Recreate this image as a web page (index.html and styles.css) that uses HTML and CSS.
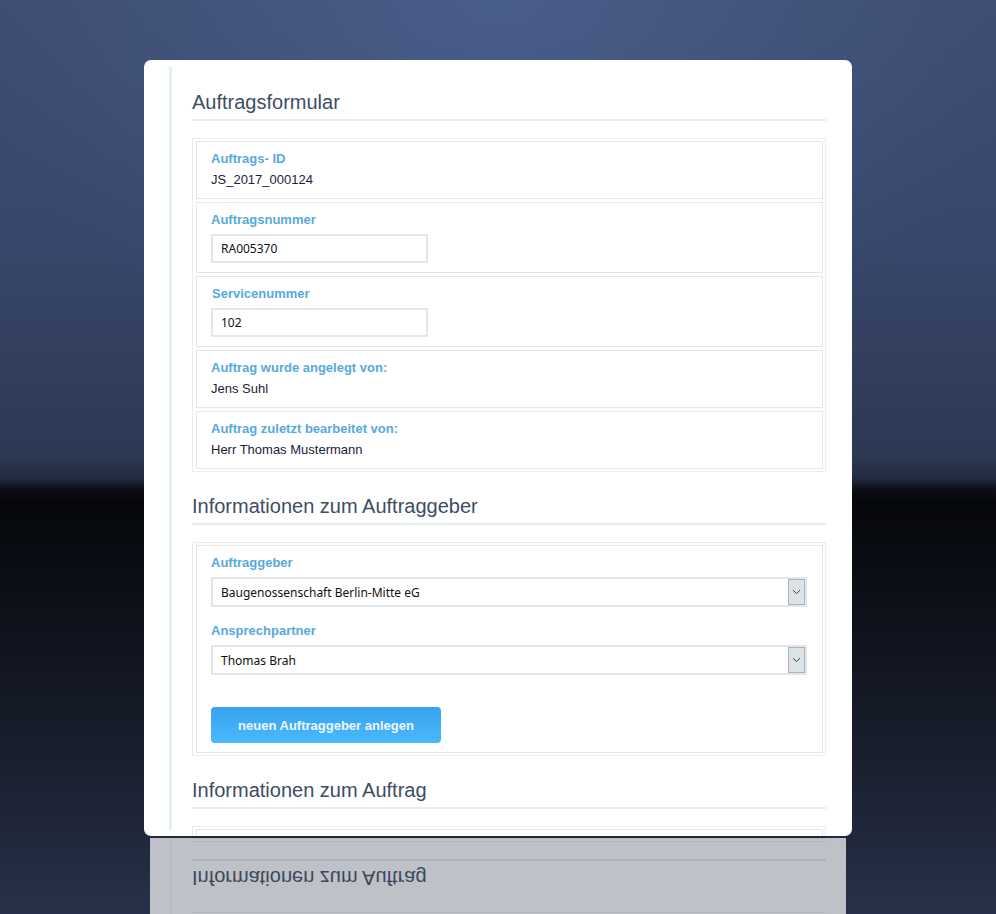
FILE: index.html
```html
<!DOCTYPE html>
<html lang="de">
<head>
<meta charset="utf-8">
<title>Auftragsformular</title>
<link rel="stylesheet" href="styles.css">
</head>
<body>
<div class="stage">
  <div class="card">
    <div class="col">
      <h2 class="sec-title">Auftragsformular</h2>
      <div class="group">
        <div class="row">
          <div class="lbl">Auftrags- ID</div>
          <div class="val">JS_2017_000124</div>
        </div>
        <div class="row">
          <div class="lbl">Auftragsnummer</div>
          <input class="inp" type="text" value="RA005370">
        </div>
        <div class="row">
          <div class="lbl lbl-shift">Servicenummer</div>
          <input class="inp" type="text" value="102">
        </div>
        <div class="row">
          <div class="lbl">Auftrag wurde angelegt von:</div>
          <div class="val">Jens Suhl</div>
        </div>
        <div class="row">
          <div class="lbl">Auftrag zuletzt bearbeitet von:</div>
          <div class="val">Herr Thomas Mustermann</div>
        </div>
      </div>

      <h2 class="sec-title">Informationen zum Auftraggeber</h2>
      <div class="group">
        <div class="row">
          <div class="lbl">Auftraggeber</div>
          <div class="select">
            <span class="select-text">Baugenossenschaft Berlin-Mitte eG</span>
            <span class="select-btn"><svg width="9" height="6" viewBox="0 0 9 6"><path d="M1 1.2 L4.5 4.6 L8 1.2" fill="none" stroke="#3a3f44" stroke-width="1"/></svg></span>
          </div>
          <div class="lbl lbl-gap">Ansprechpartner</div>
          <div class="select">
            <span class="select-text">Thomas Brah</span>
            <span class="select-btn"><svg width="9" height="6" viewBox="0 0 9 6"><path d="M1 1.2 L4.5 4.6 L8 1.2" fill="none" stroke="#3a3f44" stroke-width="1"/></svg></span>
          </div>
          <button class="btn" type="button">neuen Auftraggeber anlegen</button>
        </div>
      </div>

      <h2 class="sec-title">Informationen zum Auftrag</h2>
      <div class="group">
        <div class="row row-empty"></div>
      </div>
    </div>
  </div>

  <div class="reflect">
    <div class="reflect-col">
      <div class="reflect-inner">
        <div class="r-boxline"></div>
        <div class="r-title">Informationen zum Auftrag</div>
        <div class="r-box"><div class="r-box-in"></div></div>
      </div>
    </div>
  </div>
</div>
</body>
</html>
```

FILE: styles.css
```css
* { box-sizing: border-box; }

html, body {
  margin: 0;
  padding: 0;
  height: 914px;
  overflow: hidden;
}

body {
  font-family: "Liberation Sans", Arial, sans-serif;
  background:
    radial-gradient(ellipse 55% 40% at 50% 0%, rgba(84, 108, 160, 0.55), rgba(84, 108, 160, 0) 100%),
    linear-gradient(to bottom,
      #3d4c6f 0px,
      #37466a 250px,
      #2d3853 455px,
      #222b40 478px,
      #0b0e15 490px,
      #05070b 500px,
      #0b0e15 580px,
      #1a2030 770px,
      #283149 914px);
}

.stage {
  padding-top: 60px;
}

.card {
  width: 708px;
  height: 776px;
  margin: 0 auto;
  background: #ffffff;
  border-radius: 7px;
  overflow: hidden;
  padding: 7px 26px 0 25px;
}

.col {
  display: flow-root;
  height: 763px;
  border-left: 3px solid #e2f3ef;
  padding-left: 20px;
}

.sec-title {
  margin: 22px 0 17px;
  padding-bottom: 5px;
  font-weight: normal;
  font-size: 20px;
  line-height: 24px;
  color: #3d4d65;
  border-bottom: 2px solid #e5eff0;
}

.col > .sec-title:first-child {
  margin-top: 23px;
}

.group {
  border: 1px solid #ececec;
  padding: 2px 2px 2px 3px;
}

.row {
  border: 1px solid #e6e6e6;
  padding: 9px 15px 9px 14px;
}

.row + .row {
  margin-top: 3px;
}

.row-empty {
  height: 58px;
}

.lbl {
  font-weight: bold;
  font-size: 13px;
  line-height: 16px;
  color: #58a9dd;
}

.lbl-shift {
  padding-left: 1px;
}

.lbl-gap {
  margin-top: 16px;
}

.val {
  margin-top: 4px;
  font-size: 13px;
  line-height: 18px;
  color: #1f2038;
}

.inp {
  display: block;
  margin-top: 6px;
  width: 217px;
  height: 29px;
  border: 2px solid #e4e6e8;
  padding: 0 8px;
  font-family: "Noto Sans", "Open Sans", sans-serif;
  font-size: 12px;
  color: #111111;
  background: #ffffff;
  outline: none;
}

.select {
  display: flex;
  align-items: center;
  margin-top: 6px;
  height: 30px;
  border: 2px solid #e3e6e8;
  padding-left: 8px;
  background: #ffffff;
}

.select-text {
  flex: 1;
  font-family: "Noto Sans", "Open Sans", sans-serif;
  font-size: 12px;
  color: #111111;
}

.select-btn {
  width: 17px;
  height: 26px;
  display: flex;
  align-items: center;
  justify-content: center;
  background: #dde4e7;
  border: 1px solid #a9b5bb;
}

.btn {
  display: block;
  margin-top: 32px;
  width: 230px;
  height: 36px;
  border: 0;
  border-radius: 4px;
  background: linear-gradient(to bottom, #38a3ee, #4ab8fd);
  color: #eef7ff;
  font-family: "Liberation Sans", Arial, sans-serif;
  font-weight: bold;
  font-size: 13px;
}

/* reflection below the card */
.reflect {
  width: 696px;
  height: 76px;
  margin: 2px auto 0;
  background: #bec1c7;
  overflow: hidden;
}

.reflect-col {
  height: 76px;
  margin-left: 19px;
  border-left: 3px solid #b8bfc1;
  padding: 0 20px 0 20px;
}

.reflect-inner {
  transform: scaleY(-1);
  padding-top: 1px;
}

.r-boxline {
  border-top: 1px solid #b3b7bd;
}

.r-title {
  margin-top: 22px;
  padding-bottom: 5px;
  font-size: 20px;
  line-height: 24px;
  color: #3c485c;
  border-bottom: 2px solid #adb2b8;
}

.r-box {
  margin-top: 17px;
  border-top: 1px solid #b4b8be;
  padding-top: 2px;
}

.r-box-in {
  border-top: 1px solid #b4b8be;
  height: 1px;
}
```
